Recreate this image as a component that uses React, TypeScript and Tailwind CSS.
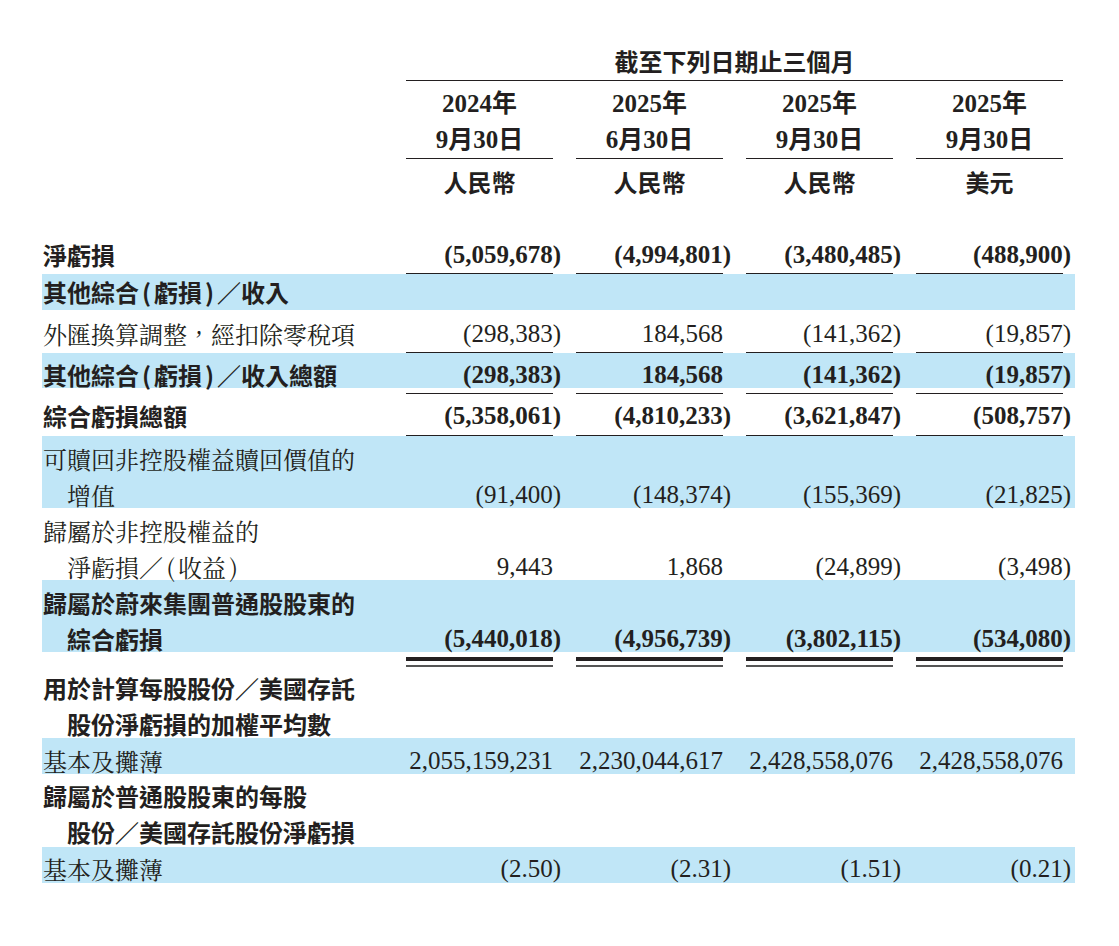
const GRID = 'grid grid-cols-[364px_170px_170px_170px_159px]';
const CJK_BOLD = "font-['Noto_Sans_CJK_TC','Noto_Sans_CJK_SC',sans-serif] font-bold";
const CJK_REG = "font-['Noto_Serif_CJK_TC','Noto_Sans_CJK_TC','Noto_Sans_CJK_SC',serif] font-normal";
const NUM = "font-['Liberation_Serif','Noto_Sans_CJK_TC',serif] text-[25px]";

type Row = {
  label: string[];
  values?: string[];
  bold?: boolean;
  blue?: boolean;
  cls: string;
  after?: 'rule' | 'gapRule' | 'double';
};

const HEADERS = [
  ['2024年', '9月30日', '人民幣'],
  ['2025年', '6月30日', '人民幣'],
  ['2025年', '9月30日', '人民幣'],
  ['2025年', '9月30日', '美元'],
];

const ROWS: Row[] = [
  { label: ['淨虧損'], values: ['(5,059,678)', '(4,994,801)', '(3,480,485)', '(488,900)'], bold: true, cls: 'h-[36px]', after: 'rule' },
  { label: ['其他綜合(虧損)／收入'], bold: true, blue: true, cls: 'h-[36px]' },
  { label: ['外匯換算調整，經扣除零稅項'], values: ['(298,383)', '184,568', '(141,362)', '(19,857)'], cls: 'h-[42px] pt-[6px]', after: 'rule' },
  { label: ['其他綜合(虧損)／收入總額'], values: ['(298,383)', '184,568', '(141,362)', '(19,857)'], bold: true, blue: true, cls: 'h-[35px] pt-[4px]', after: 'gapRule' },
  { label: ['綜合虧損總額'], values: ['(5,358,061)', '(4,810,233)', '(3,621,847)', '(508,757)'], bold: true, cls: 'h-[41px] pt-[4px]', after: 'rule' },
  { label: ['可贖回非控股權益贖回價值的', '增值'], values: ['(91,400)', '(148,374)', '(155,369)', '(21,825)'], blue: true, cls: 'h-[72px] pt-[5px]' },
  { label: ['歸屬於非控股權益的', '淨虧損／(收益)'], values: ['9,443', '1,868', '(24,899)', '(3,498)'], cls: 'h-[72px] pt-[5px]' },
  { label: ['歸屬於蔚來集團普通股股東的', '綜合虧損'], values: ['(5,440,018)', '(4,956,739)', '(3,802,115)', '(534,080)'], bold: true, blue: true, cls: 'h-[72px] pt-[5px]', after: 'double' },
  { label: ['用於計算每股股份／美國存託', '股份淨虧損的加權平均數'], bold: true, cls: 'h-[71px] pt-[3px]' },
  { label: ['基本及攤薄'], values: ['2,055,159,231', '2,230,044,617', '2,428,558,076', '2,428,558,076'], blue: true, cls: 'h-[36px] pt-[5px]' },
  { label: ['歸屬於普通股股東的每股', '股份／美國存託股份淨虧損'], bold: true, cls: 'h-[73px] pt-[4px]' },
  { label: ['基本及攤薄'], values: ['(2.50)', '(2.31)', '(1.51)', '(0.21)'], blue: true, cls: 'h-[36px] pt-[4px]' },
];

// half-width brackets in the labels sit in a wider slot, as in the print
function Label({ s }: { s: string }) {
  const parts = s.split(/([()])/);
  return (
    <>
      {parts.map((p, i) =>
        p === '(' || p === ')' ? (
          <span key={i} className="inline-block w-[15px] text-center">{p}</span>
        ) : (
          p
        )
      )}
    </>
  );
}

// closing bracket hangs past the column edge
function Amount({ v }: { v: string }) {
  if (v.endsWith(')')) {
    return (
      <>
        {v.slice(0, -1)}
        <span className="-mr-2">)</span>
      </>
    );
  }
  return <>{v}</>;
}

function Rule({ double }: { double?: boolean }) {
  return (
    <div className={GRID}>
      <div />
      {[0, 1, 2, 3].map(i => (
        <div key={i}>
          {double ? (
            <div className="w-[147px] pt-[5px]">
              <div className="h-[4px] bg-[#231f20]" />
              <div className="mt-[4px] h-[2px] bg-[#555]" />
            </div>
          ) : (
            <div className="w-[147px] h-px bg-[#231f20]" />
          )}
        </div>
      ))}
    </div>
  );
}

export default function App() {
  return (
    <div className="min-h-[946px] w-[1119px] bg-white text-[#231f20] text-[24px] leading-[36px] whitespace-nowrap">
      <div className="ml-[42px] w-[1033px] pt-[43px]">
        {/* Header */}
        <div className={GRID}>
          <div />
          <div className="col-span-4">
            <div className={`w-[657px] h-[38px] border-b border-[#231f20] text-center ${CJK_BOLD}`}>
              截至下列日期止三個月
            </div>
          </div>
        </div>
        <div className={GRID}>
          <div />
          {HEADERS.map((h, i) => (
            <div key={i}>
              <div className={`w-[147px] h-[78px] pt-[5px] border-b border-[#231f20] text-center font-bold ${NUM}`}>
                <div>{h[0]}</div>
                <div>{h[1]}</div>
              </div>
              <div className={`w-[147px] h-[41px] pt-[5px] text-center ${CJK_BOLD}`}>{h[2]}</div>
            </div>
          ))}
        </div>
        <div className="h-[37px]" />

        {/* Body */}
        {ROWS.map((r, i) => (
          <div key={i}>
            <div className={`${GRID} ${r.cls} ${r.blue ? 'bg-[#c0e6f7]' : ''}`}>
              <div className={`pl-px ${r.bold ? CJK_BOLD : CJK_REG}`}>
                {r.label.map((l, j) => (
                  <div key={j} className={j > 0 ? 'pl-6' : ''}>
                    <Label s={l} />
                  </div>
                ))}
              </div>
              {(r.values ?? ['', '', '', '']).map((v, j) => (
                <div key={j}>
                  <div className={`w-[147px] text-right ${NUM} ${r.bold ? 'font-bold' : 'font-normal'} ${r.label.length > 1 ? 'pt-9' : ''}`}>
                    <Amount v={v} />
                  </div>
                </div>
              ))}
            </div>
            {r.after === 'rule' && <Rule />}
            {r.after === 'gapRule' && (
              <>
                <div className="h-[5px]" />
                <Rule />
              </>
            )}
            {r.after === 'double' && <Rule double />}
          </div>
        ))}
      </div>
    </div>
  );
}
